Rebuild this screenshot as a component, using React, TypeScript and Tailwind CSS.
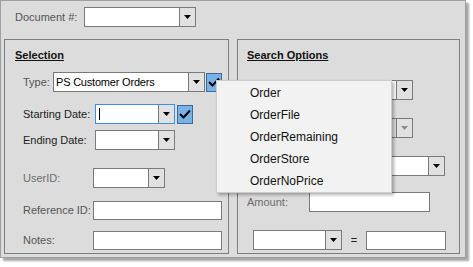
import React from 'react';

const font = { fontFamily: '"Liberation Sans", Arial, sans-serif' };

const Arrow: React.FC<{ disabled?: boolean }> = ({ disabled }) => (
  <svg width="7" height="4" viewBox="0 0 7 4">
    <polygon points="0,0 7,0 3.5,4" fill={disabled ? '#8a8a8a' : '#000'} />
  </svg>
);

interface ComboProps {
  w: string;
  h?: string;
  focused?: boolean;
  disabled?: boolean;
  children?: React.ReactNode;
}

const Combo: React.FC<ComboProps> = ({ w, h = 'h-[20px]', focused, disabled, children }) => (
  <div
    className={`${w} ${h} flex border ${focused ? 'border-[#3d8fe0]' : 'border-[#7a7a7a]'} ${
      disabled ? 'bg-[#dcdcdc]' : 'bg-white'
    }`}
  >
    <div className="flex-1 flex items-center pl-[2px] overflow-hidden whitespace-nowrap">{children}</div>
    <div className="w-[16px] flex items-center justify-center bg-[#e1e1e1] border-l border-[#7a7a7a]">
      <Arrow disabled={disabled} />
    </div>
  </div>
);

const CheckToggle: React.FC = () => (
  <div className="w-[16px] h-[19px] flex items-center justify-center bg-[#79b2e6] border border-[#3c6b98]">
    <svg width="12" height="10" viewBox="0 0 12 10">
      <path d="M1 5 L4.5 8.5 L11 1.5" stroke="#000" strokeWidth="2" fill="none" />
    </svg>
  </div>
);

const TextBox: React.FC<{ w: string; h?: string }> = ({ w, h = 'h-[19px]' }) => (
  <div className={`${w} ${h} bg-white border border-[#7a7a7a]`} />
);

const menuItems = ['Order', 'OrderFile', 'OrderRemaining', 'OrderStore', 'OrderNoPrice'];

export default function App() {
  return (
    <div className="w-[473px] h-[267px] bg-white text-[11px]" style={font}>
      <div className="relative w-[466px] h-[258px] bg-[#dcdcdc] border border-[#a0a0a0] shadow-[3px_3px_2px_rgba(0,0,0,0.35)]">
        {/* Document row */}
        <div className="flex items-center mt-[6px] ml-[14px]">
          <span className="w-[69px] text-[#555]">Document #:</span>
          <Combo w="w-[112px]" />
        </div>

        <div className="flex mt-[12px] ml-[3px] gap-[8px]">
          {/* Selection */}
          <div className="w-[225px] h-[215px] border border-[#7f7f7f] flex flex-col">
            <div className="mt-[9px] ml-[10px] h-[13px] leading-[13px] font-bold underline text-[#111]">Selection</div>

            <div className="flex items-center mt-[10px] ml-[18px]">
              <span className="w-[30px] text-[#555]">Type:</span>
              <Combo w="w-[152px]">
                <span className="text-[11px] text-black tracking-[-0.2px]">PS Customer Orders</span>
              </Combo>
              <div className="ml-[1px]">
                <CheckToggle />
              </div>
            </div>

            <div className="flex items-center mt-[12px] ml-[18px]">
              <span className="w-[72px] text-[#222]">Starting Date:</span>
              <Combo w="w-[80px]" focused>
                <div className="w-[1px] h-[12px] bg-black ml-[1px]" />
              </Combo>
              <div className="ml-[2px]">
                <CheckToggle />
              </div>
            </div>

            <div className="flex items-center mt-[6px] ml-[18px]">
              <span className="w-[72px] text-[#222]">Ending Date:</span>
              <Combo w="w-[80px]" />
            </div>

            <div className="flex items-center mt-[18px] ml-[18px]">
              <span className="w-[70px] text-[#6d6d6d]">UserID:</span>
              <Combo w="w-[72px]" />
            </div>

            <div className="flex items-center mt-[13px] ml-[18px]">
              <span className="w-[70px] text-[#555]">Reference ID:</span>
              <TextBox w="w-[129px]" />
            </div>

            <div className="flex items-center mt-[11px] ml-[18px]">
              <span className="w-[70px] text-[#555]">Notes:</span>
              <TextBox w="w-[129px]" />
            </div>
          </div>

          {/* Search Options */}
          <div className="w-[223px] h-[215px] border border-[#7f7f7f] flex flex-col">
            <div className="mt-[9px] ml-[9px] h-[13px] leading-[13px] font-bold underline text-[#111]">Search Options</div>

            <div className="flex mt-[18px] ml-[71px]">
              <Combo w="w-[104px]" />
            </div>
            <div className="flex mt-[18px] ml-[71px]">
              <Combo w="w-[104px]" disabled />
            </div>
            <div className="flex mt-[18px] ml-[71px]">
              <Combo w="w-[136px]" />
            </div>

            <div className="flex items-center mt-[16px] ml-[9px]">
              <span className="w-[62px] text-[#6d6d6d]">Amount:</span>
              <TextBox w="w-[121px]" h="h-[20px]" />
            </div>

            <div className="flex items-center mt-[18px] ml-[15px]">
              <Combo w="w-[89px]" />
              <span className="w-[24px] text-center text-[#222]">=</span>
              <TextBox w="w-[80px]" />
            </div>
          </div>
        </div>

        {/* Dropdown menu */}
        <div className="absolute left-[215px] top-[79px] w-[176px] h-[113px] bg-[#f2f2f2] border border-[#cccccc] shadow-[2px_2px_3px_rgba(0,0,0,0.3)] pt-[1px]">
          {menuItems.map((item) => (
            <div key={item} className="h-[22px] flex items-center pl-[33px] text-[12px] text-[#111]">
              {item}
            </div>
          ))}
        </div>
      </div>
    </div>
  );
}
